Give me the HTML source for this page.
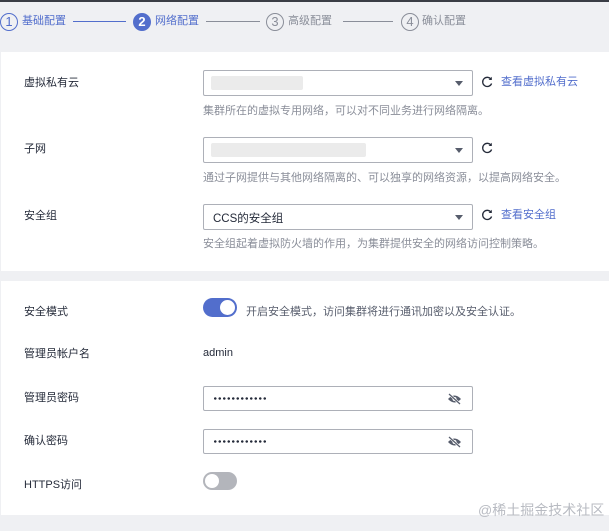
<!DOCTYPE html>
<html><head><meta charset="utf-8"><style>
*{margin:0;padding:0;box-sizing:border-box}
body{width:609px;height:531px;background:#eff0f3;font-family:"Liberation Sans","Noto Sans CJK SC",sans-serif;font-size:11px;color:#252b3a;position:relative;overflow:hidden}
.a{position:absolute;white-space:nowrap}
.top{position:absolute;left:0;top:0;width:609px;height:2px;background:#3a3d45}
.panel{position:absolute;left:1px;width:608px;background:#fff}
.lbl{position:absolute;left:24px;font-size:11px;color:#252b3a;line-height:14px}
.sel{position:absolute;left:203px;width:270px;height:26px;border:1px solid #adb0b8;border-radius:2px;background:#fff}
.sel .tri{position:absolute;right:9px;top:10px;width:0;height:0;border-left:4px solid transparent;border-right:4px solid transparent;border-top:5px solid #575d6c}
.blur{position:absolute;left:7px;top:5px;height:14px;background:#ebebeb;border-radius:2px}
.help{position:absolute;left:203px;font-size:11px;color:#8a8e99;line-height:14px}
.ref{position:absolute;left:481px}
.link{position:absolute;left:501px;color:#526ecc;font-size:11px;line-height:14px}
.step{position:absolute;top:14px;font-size:11px;line-height:14px}
.circ{position:absolute;top:13px;width:18px;height:18px;border-radius:50%;border:1px solid #8a8e99;color:#8a8e99;font-size:13px;text-align:center;line-height:16px}
.line{position:absolute;top:21px;height:1px;background:#8a8e99}
.pw{position:absolute;left:203px;width:270px;height:25px;border:1px solid #adb0b8;border-radius:2px}
.pw .dots{position:absolute;left:9px;top:10px;width:54px;height:3px;background:radial-gradient(circle,#252b3a 1.1px,transparent 1.4px) 0 0/4.5px 3px repeat-x}
.pw svg{position:absolute;right:10px;top:6px}
</style></head><body>
<div class="top"></div>
<div class="circ" style="left:0px;border-color:#526ecc;color:#526ecc">1</div>
<div class="step" style="left:22px;color:#526ecc">基础配置</div>
<div class="line" style="left:73px;width:53px;background:#526ecc"></div>
<div class="circ" style="left:133px;background:#526ecc;border-color:#526ecc;color:#fff;font-weight:bold">2</div>
<div class="step" style="left:155px;color:#526ecc">网络配置</div>
<div class="line" style="left:206px;width:54px"></div>
<div class="circ" style="left:266px">3</div>
<div class="step" style="left:288px;color:#8a8e99">高级配置</div>
<div class="line" style="left:343px;width:50px"></div>
<div class="circ" style="left:401px">4</div>
<div class="step" style="left:422px;color:#8a8e99">确认配置</div>

<div class="panel" style="top:52px;height:219px"></div>
<div class="lbl" style="top:76px">虚拟私有云</div>
<div class="sel" style="top:70px"><div class="blur" style="width:92px"></div><div class="tri"></div></div>
<svg class="ref" style="top:76px" width="12" height="12" viewBox="0 0 12 12"><path d="M10 3.2A4.6 4.6 0 1 0 10.6 7.5" fill="none" stroke="#252b3a" stroke-width="1.3"/><path d="M10.8 0.8V4H7.6Z" fill="#252b3a"/></svg>
<div class="link" style="top:75px">查看虚拟私有云</div>
<div class="help" style="top:104px">集群所在的虚拟专用网络，可以对不同业务进行网络隔离。</div>

<div class="lbl" style="top:142px">子网</div>
<div class="sel" style="top:137px"><div class="blur" style="width:155px"></div><div class="tri"></div></div>
<svg class="ref" style="top:142px" width="12" height="12" viewBox="0 0 12 12"><path d="M10 3.2A4.6 4.6 0 1 0 10.6 7.5" fill="none" stroke="#252b3a" stroke-width="1.3"/><path d="M10.8 0.8V4H7.6Z" fill="#252b3a"/></svg>
<div class="help" style="top:171px">通过子网提供与其他网络隔离的、可以独享的网络资源，以提高网络安全。</div>

<div class="lbl" style="top:209px">安全组</div>
<div class="sel" style="top:204px"><span class="a" style="left:9px;top:5px;font-size:11.5px">CCS的安全组</span><div class="tri"></div></div>
<svg class="ref" style="top:209px" width="12" height="12" viewBox="0 0 12 12"><path d="M10 3.2A4.6 4.6 0 1 0 10.6 7.5" fill="none" stroke="#252b3a" stroke-width="1.3"/><path d="M10.8 0.8V4H7.6Z" fill="#252b3a"/></svg>
<div class="link" style="top:208px">查看安全组</div>
<div class="help" style="top:237px">安全组起着虚拟防火墙的作用，为集群提供安全的网络访问控制策略。</div>

<div class="panel" style="top:281px;height:234px"></div>
<div class="lbl" style="top:305px">安全模式</div>
<div class="a" style="left:203px;top:298px;width:34px;height:19px;border-radius:10px;background:#526ecc"><div class="a" style="right:2px;top:2px;width:15px;height:15px;border-radius:50%;background:#fff"></div></div>
<div class="help" style="left:246px;top:305px;color:#575d6c">开启安全模式，访问集群将进行通讯加密以及安全认证。</div>
<div class="lbl" style="top:347px">管理员帐户名</div>
<div class="a" style="left:203px;top:347px;font-size:11px">admin</div>
<div class="lbl" style="top:391px">管理员密码</div>
<div class="pw" style="top:386px"><div class="dots"></div><svg width="15" height="12" viewBox="0 0 15 12"><path d="M1 6Q7.5-1 14 6Q7.5 13 1 6Z" fill="#575d6c"/><circle cx="7.5" cy="6" r="2" fill="#fff"/><path d="M2 1L13 11" stroke="#fff" stroke-width="2.5"/><path d="M2 1L13 11" stroke="#575d6c" stroke-width="1.2"/></svg></div>
<div class="lbl" style="top:434px">确认密码</div>
<div class="pw" style="top:429px"><div class="dots"></div><svg width="15" height="12" viewBox="0 0 15 12"><path d="M1 6Q7.5-1 14 6Q7.5 13 1 6Z" fill="#575d6c"/><circle cx="7.5" cy="6" r="2" fill="#fff"/><path d="M2 1L13 11" stroke="#fff" stroke-width="2.5"/><path d="M2 1L13 11" stroke="#575d6c" stroke-width="1.2"/></svg></div>
<div class="lbl" style="top:478px">HTTPS访问</div>
<div class="a" style="left:203px;top:472px;width:34px;height:18px;border-radius:9px;background:#b3b5bb"><div class="a" style="left:2px;top:2px;width:14px;height:14px;border-radius:50%;background:#fff"></div></div>
<div class="a" style="left:478px;top:500px;font-size:14px;color:#b8bbc2">@稀土掘金技术社区</div>
</body></html>
